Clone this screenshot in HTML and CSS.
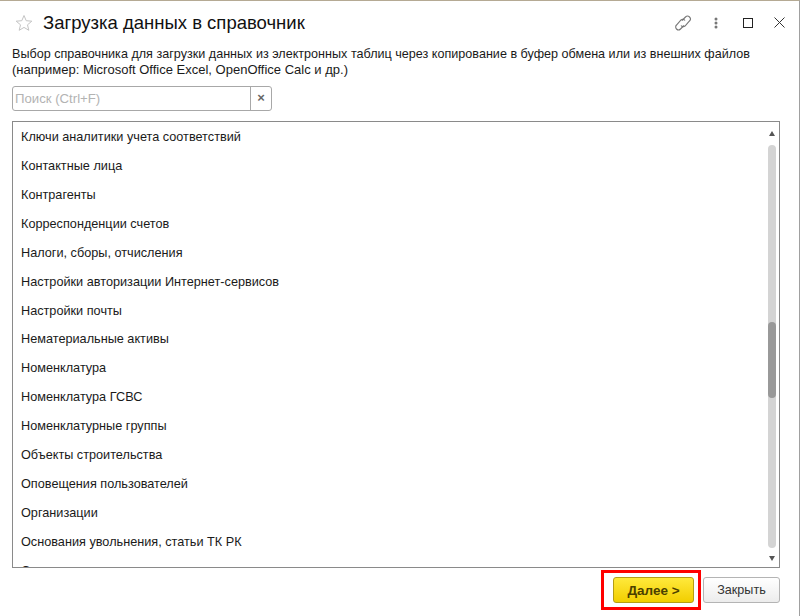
FILE: index.html
```html
<!DOCTYPE html>
<html lang="ru">
<head>
<meta charset="utf-8">
<title>Загрузка данных в справочник</title>
<link rel="stylesheet" href="styles.css">
</head>
<body>
<div class="window">
  <header class="titlebar">
    <svg class="star" width="18" height="18" viewBox="0 0 18 18"><path d="M9 1.500l2.200 5.200 5.600.5-4.300 3.600 1.300 5.500L9 13.400l-4.800 2.900 1.300-5.500L1.200 7.200l5.600-.5z" fill="none" stroke="#c4c4c4"/></svg>
    <h1 class="title">Загрузка данных в справочник</h1>
    <div class="controls">
      <svg class="ctl-link" width="18" height="18" viewBox="0 0 18 18"><g fill="none" stroke="#777" stroke-width="1.100"><path d="M8 6.500l3.500-3.500a2.700 2.700 0 0 1 4 4l-4.500 5a2.700 2.700 0 0 1-4-.5"/><path d="M10 11.500l-3.500 3.500a2.700 2.700 0 0 1-4-4l4.500-5a2.700 2.700 0 0 1 4 .5"/></g></svg>
      <svg class="ctl-more" width="4" height="12" viewBox="0 0 4 12"><circle cx="2" cy="2" r="1.500" fill="#777"/><circle cx="2" cy="6" r="1.500" fill="#777"/><circle cx="2" cy="10" r="1.500" fill="#777"/></svg>
      <span class="ctl-max"></span>
      <svg class="ctl-close" width="11" height="11" viewBox="0 0 11 11"><path d="M.5.500l10 10M10.500.500l-10 10" stroke="#333" fill="none"/></svg>
    </div>
  </header>
  <p class="desc"><span class="desc-line">Выбор справочника для загрузки данных из электронных таблиц через копирование в буфер обмена или из внешних файлов</span><span class="desc-line desc-line-second">(например: Microsoft Office Excel, OpenOffice Calc и др.)</span></p>
  <div class="search">
    <span class="search-input">Поиск (Ctrl+F)</span>
    <span class="search-clear">×</span>
  </div>
  <div class="listbox">
    <ul class="list">
      <li>Ключи аналитики учета соответствий</li>
      <li>Контактные лица</li>
      <li>Контрагенты</li>
      <li>Корреспонденции счетов</li>
      <li>Налоги, сборы, отчисления</li>
      <li>Настройки авторизации Интернет-сервисов</li>
      <li>Настройки почты</li>
      <li>Нематериальные активы</li>
      <li>Номенклатура</li>
      <li>Номенклатура ГСВС</li>
      <li>Номенклатурные группы</li>
      <li>Объекты строительства</li>
      <li>Оповещения пользователей</li>
      <li>Организации</li>
      <li>Основания увольнения, статьи ТК РК</li>
      <li>Основные средства</li>
    </ul>
    <div class="scrollbar">
      <span class="arrow arrow-up"></span>
      <div class="track"><div class="thumb"></div></div>
      <span class="arrow arrow-down"></span>
    </div>
  </div>
  <footer class="footer">
    <button class="btn btn-primary">Далее &gt;</button>
    <button class="btn">Закрыть</button>
  </footer>
  <div class="highlight"></div>
</div>
</body>
</html>
```
FILE: styles.css
```css
html, body { margin: 0; padding: 0; background: #fff; }
body { font-family: "Liberation Sans", Arial, sans-serif; color: #1a1a1a; }
.window {
  position: relative;
  width: 800px;
  height: 616px;
  box-sizing: border-box;
  border-top: 1px solid #b5aa94;
  border-right: 1px solid #a0a0a0;
  padding: 0 19px 0 12px;
  overflow: hidden;
  background: #fff;
}
.titlebar { display: flex; align-items: center; height: 43px; }
.star { margin-left: 3px; flex: none; }
.title { margin: 0 0 0 10px; font-size: 18.500px; font-weight: 400; color: #111; }
.controls { margin-left: auto; display: flex; align-items: center; }
.ctl-link { margin-right: 22px; }
.ctl-more { margin-right: 25px; }
.ctl-max { width: 8px; height: 8px; border: 1px solid #222; margin-right: 21px; }
.ctl-close { margin-right: -5px; }
.desc { margin: 2px 0 0; font-size: 12.600px; line-height: 16px; color: #1a1a1a; white-space: nowrap; }
.desc-line { display: block; }
.desc-line-second { font-size: 13px; }
.search {
  display: flex;
  width: 260px;
  height: 25px;
  margin-top: 8px;
  box-sizing: border-box;
  border: 1px solid #a8a8a8;
  border-radius: 3px;
}
.search-input { flex: 1; font-size: 13.200px; line-height: 23px; padding-left: 2px; color: #b3b3b3; border-right: 1px solid #a8a8a8; }
.search-clear { width: 20px; text-align: center; font-size: 13px; font-weight: 700; line-height: 22px; color: #666; }
.listbox {
  display: flex;
  height: 447px;
  margin-top: 10px;
  box-sizing: border-box;
  border: 1px solid #8a8a8a;
  overflow: hidden;
}
.list { flex: 1; margin: 0; padding: 1px 0 0 8px; list-style: none; font-size: 12.700px; }
.list li { height: 28.930px; line-height: 28px; color: #1a1a1a; white-space: nowrap; }
.scrollbar { width: 8px; margin-right: 3px; display: flex; flex-direction: column; align-items: center; }
.arrow { width: 0; height: 0; border-left: 3.500px solid transparent; border-right: 3.500px solid transparent; flex: none; }
.arrow-up { border-bottom: 5px solid #555; margin: 9px 0 9px; }
.arrow-down { border-top: 5px solid #555; margin: 8px 0 6px; }
.track { flex: 1; width: 8px; background: #d4d4d4; border-radius: 4px; }
.thumb { width: 8px; height: 76px; margin-top: 177px; background: #999; border-radius: 4px; }
.footer { display: flex; justify-content: flex-end; gap: 9px; margin-top: 9px; }
.btn {
  height: 26px;
  width: 77px;
  padding: 0;
  box-sizing: border-box;
  font-family: inherit;
  font-size: 12.600px;
  color: #333;
  border: 1px solid #b4b4b4;
  border-radius: 3px;
  background: linear-gradient(#fff, #ececec);
}
.btn-primary {
  width: 81px;
  font-size: 13.500px;
  font-weight: 700;
  color: #4b4000;
  border-color: #b59d14;
  background: linear-gradient(#ffe93c, #f2ce00);
}
.highlight { position: absolute; left: 601px; top: 569px; width: 100px; height: 40px; box-sizing: border-box; border: 3px solid #f00; }
```
